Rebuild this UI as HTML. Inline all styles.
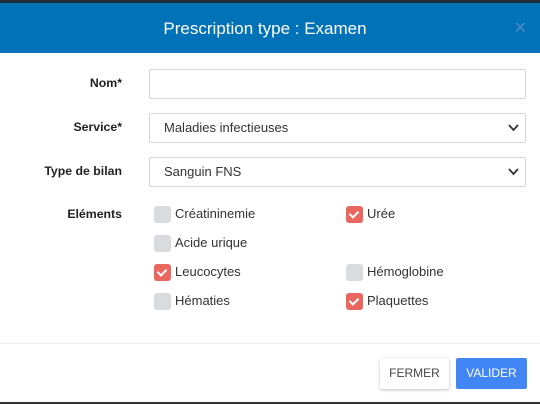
<!DOCTYPE html><html><head><style>
body{margin:0;width:540px;height:404px;overflow:hidden;background:#fff;font-family:"Liberation Sans",sans-serif;position:relative}
.top{position:absolute;left:0;top:0;width:540px;height:3px;background:#1f2d3a}
.hd{position:absolute;left:0;top:3px;width:540px;height:50px;background:#0171b8;color:#fff;font-size:17px;text-align:center;line-height:52px;text-indent:-10px}
.x{position:absolute;right:13px;top:0;color:#4b8fc4;font-size:16px}
.lbl{position:absolute;right:418px;font-size:12.3px;font-weight:bold;color:#222}
.in{position:absolute;left:149px;width:375px;height:28px;border:1px solid #d4d7db;border-radius:2px;font-size:13px;color:#333;line-height:28px;box-sizing:content-box}
.in span{padding-left:14px}
.in svg{position:absolute;right:6px;top:10px}
.cb{position:absolute;width:17px;height:17px;border-radius:3px;background:#d8dcdf}
.cb.on{background:#e9675e}
.cb.on:after{content:"";position:absolute;left:5px;top:3px;width:4px;height:7px;border:solid #fff;border-width:0 2px 2px 0;transform:rotate(45deg)}
.t{position:absolute;font-size:13px;color:#333}
.sep{position:absolute;left:0;top:343px;width:540px;height:1px;background:#eceef0}
.btn{position:absolute;top:358px;height:31px;line-height:31px;text-align:center;font-size:12px;border-radius:2px}
.bot{position:absolute;left:0;top:402px;width:540px;height:2px;background:#333}
</style></head><body>
<div class="top"></div>
<div class="hd">Prescription type : Examen<span class="x">✕</span></div>
<div class="lbl" style="top:76px">Nom*</div>
<div class="in" style="top:69px"></div>
<div class="lbl" style="top:120px">Service*</div>
<div class="in" style="top:113px"><span>Maladies infectieuses</span><svg width="11" height="8"><path d="M1 1l4.5 5 4.5-5" stroke="#333" stroke-width="1.8" fill="none"/></svg></div>
<div class="lbl" style="top:164px">Type de bilan</div>
<div class="in" style="top:157px"><span>Sanguin FNS</span><svg width="11" height="8"><path d="M1 1l4.5 5 4.5-5" stroke="#333" stroke-width="1.8" fill="none"/></svg></div>
<div class="lbl" style="top:207px">Eléments</div>
<div class="cb" style="left:154px;top:206px"></div><div class="t" style="left:175px;top:206px">Créatininemie</div>
<div class="cb on" style="left:346px;top:206px"></div><div class="t" style="left:367px;top:206px">Urée</div>
<div class="cb" style="left:154px;top:235px"></div><div class="t" style="left:175px;top:235px">Acide urique</div>
<div class="cb on" style="left:154px;top:264px"></div><div class="t" style="left:175px;top:264px">Leucocytes</div>
<div class="cb" style="left:346px;top:264px"></div><div class="t" style="left:367px;top:264px">Hémoglobine</div>
<div class="cb" style="left:154px;top:293px"></div><div class="t" style="left:175px;top:293px">Hématies</div>
<div class="cb on" style="left:346px;top:293px"></div><div class="t" style="left:367px;top:293px">Plaquettes</div>
<div class="sep"></div>
<div class="btn" style="left:380px;width:69px;background:#fff;color:#444;box-shadow:0 1px 3px rgba(0,0,0,.25)">FERMER</div>
<div class="btn" style="left:456px;width:71px;background:#4285f4;color:#fff">VALIDER</div>
<div class="bot"></div>
</body></html>
